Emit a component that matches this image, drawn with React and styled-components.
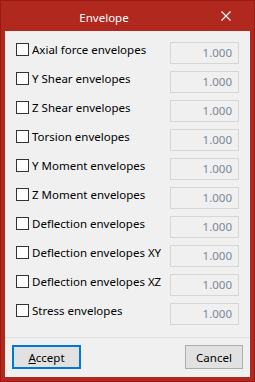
import React from 'react';
import styled, { createGlobalStyle } from 'styled-components';

const GlobalStyle = createGlobalStyle`
  html, body {
    margin: 0;
    padding: 0;
    background: #ffffff;
  }
  body {
    font-family: "Noto Sans", "Liberation Sans", sans-serif;
    font-size: 11.5px;
  }
`;

const Window = styled.div`
  width: 255px;
  height: 382px;
  box-sizing: border-box;
  border: 1px solid #971b13;
  background: #b0281e;
  display: flex;
  flex-direction: column;
`;

const TitleBar = styled.div`
  height: 30px;
  display: flex;
  align-items: center;
  color: #ffffff;
`;

const Title = styled.div`
  flex: 1;
  text-align: center;
  padding-left: 4px;
  padding-top: 2px;
  font-size: 11.5px;
`;

const CloseButton = styled.div`
  width: 46px;
  height: 30px;
  display: flex;
  align-items: center;
  justify-content: center;
  margin-right: 5px;
`;

const Body = styled.div`
  flex: 1;
  margin: 0 4px 4px 4px;
  background: #f0f0f0;
  display: flex;
  flex-direction: column;
`;

const List = styled.div`
  padding: 11px 11px 0 11px;
  display: flex;
  flex-direction: column;
  gap: 7px;
`;

const Row = styled.div`
  display: flex;
  align-items: flex-start;
  height: 22px;
`;

const Check = styled.label`
  flex: 1;
  display: flex;
  align-items: flex-start;
  gap: 3px;
  color: #000000;
  line-height: 15px;
`;

const Box = styled.span`
  width: 13px;
  height: 13px;
  box-sizing: border-box;
  border: 1px solid #333333;
  background: #ffffff;
  margin-top: 1px;
  flex: none;
`;

const Field = styled.div`
  width: 69px;
  height: 22px;
  box-sizing: border-box;
  border: 1px solid #d6d6d6;
  background: #f0f0f0;
  color: #7b8796;
  text-align: right;
  padding: 0 6px;
  line-height: 20px;
`;

const Separator = styled.div`
  margin-top: 12px;
  height: 1px;
  background: #dfdfdf;
`;

const Footer = styled.div`
  flex: 1;
  display: flex;
  justify-content: space-between;
  align-items: flex-start;
  padding: 7px 7px 0 7px;
`;

const Button = styled.div`
  height: 24px;
  width: ${p => p.$w}px;
  box-sizing: border-box;
  border: ${p => (p.$primary ? '2px solid #0078d7' : '1px solid #adadad')};
  background: #e1e1e1;
  display: flex;
  align-items: center;
  justify-content: center;
  color: #000000;
`;

const items = [
  'Axial force envelopes',
  'Y Shear envelopes',
  'Z Shear envelopes',
  'Torsion envelopes',
  'Y Moment envelopes',
  'Z Moment envelopes',
  'Deflection envelopes',
  'Deflection envelopes XY',
  'Deflection envelopes XZ',
  'Stress envelopes',
];

export default function App() {
  return (
    <>
      <GlobalStyle />
      <Window>
        <TitleBar>
          <Title>Envelope</Title>
          <CloseButton>
            <svg width="10" height="10" viewBox="0 0 10 10">
              <path d="M0.5 0.5 L9.5 9.5 M9.5 0.5 L0.5 9.5" stroke="#ffffff" strokeWidth="1.2" />
            </svg>
          </CloseButton>
        </TitleBar>
        <Body>
          <List>
            {items.map(label => (
              <Row key={label}>
                <Check>
                  <Box />
                  <span>{label}</span>
                </Check>
                <Field>1.000</Field>
              </Row>
            ))}
          </List>
          <Separator />
          <Footer>
            <Button $primary $w={69}>
              <span><u>A</u>ccept</span>
            </Button>
            <Button $w={58}>Cancel</Button>
          </Footer>
        </Body>
      </Window>
    </>
  );
}
